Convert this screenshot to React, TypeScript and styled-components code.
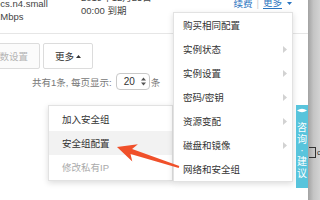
import React from 'react';
import styled, { createGlobalStyle } from 'styled-components';

const GlobalStyle = createGlobalStyle`
  html, body {
    margin: 0;
    padding: 0;
    background: #fff;
  }
  body {
    font-family: "Liberation Sans", "Noto Sans CJK SC", sans-serif;
  }
  * { box-sizing: border-box; }
`;

const Page = styled.div`
  position: relative;
  width: 320px;
  height: 200px;
  overflow: hidden;
  display: flex;
`;

const Main = styled.div`
  width: 308px;
  flex: none;
  background: #fff;
  display: flex;
  flex-direction: column;
`;

const TableRow = styled.div`
  height: 34px;
  flex: none;
  border-bottom: 1px solid #e6e6e6;
  display: flex;
  align-items: flex-start;
  overflow: hidden;
  font-size: 9.5px;
  line-height: 13px;
  color: #444;
`;

const Cell = styled.div<{ $top: number; $width?: number; $left?: number }>`
  margin-top: ${p => p.$top}px;
  margin-left: ${p => p.$left ?? 0}px;
  ${p => (p.$width ? `width: ${p.$width}px; flex: none;` : 'flex: 1;')}
  white-space: nowrap;
`;

const Actions = styled.div`
  margin-top: -3.5px;
  padding-right: 16px;
  display: flex;
  align-items: center;
  height: 13px;
  white-space: nowrap;
`;

const Link = styled.span<{ $underline?: boolean }>`
  color: #2a74c0;
  ${p => p.$underline && 'border-bottom: 1px solid #2a74c0; line-height: 11px;'}
`;

const Sep = styled.span`
  color: #cfcfcf;
  margin: 0 4px;
`;

const Caret = styled.svg`
  margin-left: 5px;
  display: block;
`;

const ButtonBar = styled.div`
  margin-top: 9px;
  display: flex;
  gap: 3px;
`;

const Button = styled.button<{ $width: number; $left?: number; $disabled?: boolean }>`
  height: 26px;
  width: ${p => p.$width}px;
  margin-left: ${p => p.$left ?? 0}px;
  flex: none;
  border: 1px solid #dcdcdc;
  border-radius: 2px;
  background: ${p => (p.$disabled ? '#fbfbfb' : '#fff')};
  color: ${p => (p.$disabled ? '#b4b4b4' : '#333')};
  font-family: inherit;
  font-size: 9.5px;
  display: flex;
  align-items: center;
  justify-content: ${p => (p.$disabled ? 'flex-start' : 'center')};
  padding: 0 11px;
  gap: 2px;
  white-space: nowrap;
  overflow: hidden;
`;

const Pager = styled.div`
  margin-top: 4px;
  padding-left: 32px;
  display: flex;
  align-items: center;
  font-size: 9.5px;
  color: #777;
  white-space: nowrap;
`;

const PageSize = styled.div`
  margin: 0 1px 0 4px;
  width: 34px;
  height: 17px;
  border: 1px solid #c9c9c9;
  border-radius: 4px;
  display: flex;
  align-items: center;
  justify-content: space-between;
  padding: 0 3px 0 7px;
  color: #333;
  font-size: 10px;
`;

const SideStrip = styled.div`
  flex: 1;
  background: linear-gradient(to right, #a2a2a2, #c4c4c4 45%, #d3d3d3);
  padding-top: 147px;
  display: flex;
  align-items: flex-start;
  overflow: hidden;
`;

const StripBox = styled.div`
  width: 7px;
  height: 11px;
  flex: none;
  border: 1px solid #333;
  border-left: none;
  margin-left: 1px;
`;

const StripText = styled.span`
  font-size: 8px;
  color: #333;
  line-height: 11px;
  margin-left: 1px;
`;

const Menu = styled.div<{ $left: number; $top: number; $width: number; $z: number }>`
  position: absolute;
  left: ${p => p.$left}px;
  top: ${p => p.$top}px;
  width: ${p => p.$width}px;
  background: #fff;
  border: 1px solid #e2e2e2;
  box-shadow: 0 2px 6px rgba(0, 0, 0, 0.14);
  padding: ${p => (p.$z === 1 ? '1px 0' : '0')};
  z-index: ${p => p.$z};
`;

const MenuItem = styled.div<{ $pad: number; $active?: boolean; $disabled?: boolean }>`
  height: 24px;
  display: flex;
  align-items: center;
  justify-content: space-between;
  padding: 0 5px 0 ${p => p.$pad}px;
  font-size: 9.5px;
  color: ${p => (p.$disabled ? '#aaa' : '#333')};
  background: ${p => (p.$active ? '#f2f2f2' : 'transparent')};
  white-space: nowrap;
`;

const Feedback = styled.div`
  position: absolute;
  left: 296px;
  top: 105px;
  width: 12px;
  height: 83px;
  background: #58c4dc;
  display: flex;
  flex-direction: column;
  align-items: center;
  padding-top: 3px;
  z-index: 3;
`;

const FeedbackChar = styled.span<{ $h?: number }>`
  color: #fff;
  font-size: 10px;
  line-height: ${p => p.$h ?? 12}px;
  height: ${p => p.$h ?? 12}px;
`;

const Overlay = styled.svg`
  position: absolute;
  left: 0;
  top: 0;
  pointer-events: none;
  z-index: 5;
`;

const Chevron = () => (
  <svg width="4" height="7" viewBox="0 0 4 7">
    <path d="M0 0 L4 3.5 L0 7 Z" fill="#d2d2d2" />
  </svg>
);

const mainMenu = [
  { label: '购买相同配置', sub: false },
  { label: '实例状态', sub: true },
  { label: '实例设置', sub: true },
  { label: '密码/密钥', sub: true },
  { label: '资源变配', sub: true },
  { label: '磁盘和镜像', sub: true },
  { label: '网络和安全组', sub: false },
];

const subMenu = [
  { label: '加入安全组' },
  { label: '安全组配置', active: true },
  { label: '修改私有IP', disabled: true },
];

export default function App() {
  return (
    <>
      <GlobalStyle />
      <Page>
        <Main>
          <TableRow>
            <Cell $top={-3.5} $left={-5} $width={86}>
              <div>ecs.n4.small</div>
              <div>1Mbps</div>
            </Cell>
            <Cell $top={-9.5}>
              <div>2019年12月25日</div>
              <div>00:00 到期</div>
            </Cell>
            <Actions>
              <Link>续费</Link>
              <Sep>|</Sep>
              <Link $underline>更多</Link>
              <Caret width="5" height="3" viewBox="0 0 5 3">
                <path d="M0 0 L5 0 L2.5 3 Z" fill="#2a74c0" />
              </Caret>
            </Actions>
          </TableRow>

          <ButtonBar>
            <Button $width={62} $left={-22} $disabled>参数设置</Button>
            <Button $width={50}>
              更多
              <svg width="5" height="3" viewBox="0 0 5 3">
                <path d="M0 3 L5 3 L2.5 0 Z" fill="#333" />
              </svg>
            </Button>
          </ButtonBar>

          <Pager>
            共有1条, 每页显示:
            <PageSize>
              20
              <svg width="5" height="9" viewBox="0 0 5 9">
                <path d="M0 3.5 L5 3.5 L2.5 0.5 Z M0 5.5 L5 5.5 L2.5 8.5 Z" fill="#555" />
              </svg>
            </PageSize>
            条
          </Pager>
        </Main>

        <SideStrip>
          <StripBox />
          <StripText>c</StripText>
        </SideStrip>

        <Menu $left={48} $top={105} $width={125} $z={1}>
          {subMenu.map(item => (
            <MenuItem key={item.label} $pad={13} $active={item.active} $disabled={item.disabled}>
              {item.label}
            </MenuItem>
          ))}
        </Menu>

        <Menu $left={173} $top={12} $width={120} $z={2}>
          {mainMenu.map(item => (
            <MenuItem key={item.label} $pad={9}>
              {item.label}
              {item.sub && <Chevron />}
            </MenuItem>
          ))}
        </Menu>

        <Feedback>
          <svg width="10" height="5" viewBox="0 0 10 5">
            <path d="M0 2.5 Q5 -1 10 2.5 Q5 6 0 2.5 Z" fill="#fff" />
          </svg>
          <div style={{ height: 9 }} />
          <FeedbackChar>咨</FeedbackChar>
          <FeedbackChar>询</FeedbackChar>
          <FeedbackChar $h={10}>·</FeedbackChar>
          <FeedbackChar>建</FeedbackChar>
          <FeedbackChar>议</FeedbackChar>
        </Feedback>

        <Overlay width="320" height="200" viewBox="0 0 320 200">
          <polygon
            points="117,147 137.9,144.2 132.1,149.1 179.3,166 178.7,168 130.5,154.1 132.3,161.4"
            fill="#f0502a"
          />
        </Overlay>
      </Page>
    </>
  );
}
